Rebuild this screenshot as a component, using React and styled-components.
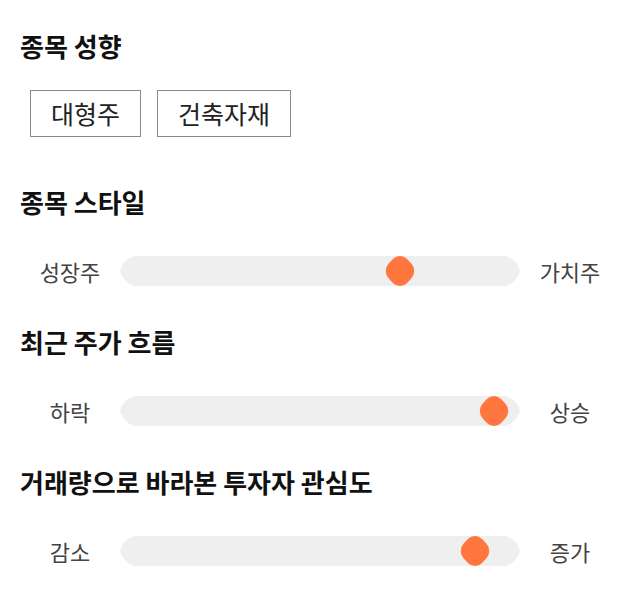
import React from 'react'
import styled, { createGlobalStyle } from 'styled-components'

const GlobalStyle = createGlobalStyle`
  body {
    margin: 0;
    background: #ffffff;
    font-family: "Noto Sans CJK KR", "Noto Sans", sans-serif;
  }
`

const Page = styled.div`
  display: flex;
  flex-direction: column;
  gap: 38px;
  padding: 28px 20px 20px;
`

const Section = styled.section`
  display: flex;
  flex-direction: column;
`

const Title = styled.h2`
  margin: 0;
  font-size: 26px;
  line-height: 36px;
  font-weight: 700;
  color: #111;
`

const ChipRow = styled.div`
  display: flex;
  gap: 16px;
  margin: 26px 0 9px;
  padding-left: 10px;
`

const Chip = styled.button`
  height: 47px;
  padding: 0 20px;
  border: 1px solid #8a8a8a;
  background: #fff;
  font-family: inherit;
  font-size: 25px;
  line-height: 45px;
  color: #222;
`

const SliderRow = styled.div`
  display: flex;
  align-items: center;
  margin-top: 36px;
`

const Label = styled.span`
  width: 100px;
  text-align: center;
  font-size: 22px;
  line-height: 30px;
  color: #444;
`

const Track = styled.div`
  position: relative;
  flex: 1;
  height: 30px;
`

const Rail = styled.div`
  width: 400px;
  height: 30px;
  background: #efefef;
  clip-path: path('M15 0 H385 A20 20 0 0 1 400 15 A20 20 0 0 1 385 30 H15 A20 20 0 0 1 0 15 A20 20 0 0 1 15 0 Z');
`

const Thumb = styled.div`
  position: absolute;
  top: 2px;
  width: 26px;
  height: 26px;
  margin-left: -13px;
  border-radius: 10px;
  background: #ff773f;
  transform: scaleY(1.06) rotate(45deg);
`

const sliders = [
  { title: '종목 스타일', left: '성장주', right: '가치주', value: 0.7 },
  { title: '최근 주가 흐름', left: '하락', right: '상승', value: 0.935 },
  { title: '거래량으로 바라본 투자자 관심도', left: '감소', right: '증가', value: 0.8875 },
]

function Slider({ left, right, value }) {
  return (
    <SliderRow>
      <Label>{left}</Label>
      <Track>
        <Rail />
        <Thumb style={{ left: `${value * 100}%` }} />
      </Track>
      <Label>{right}</Label>
    </SliderRow>
  )
}

export default function App() {
  return (
    <>
      <GlobalStyle />
      <Page>
        <Section>
          <Title>종목 성향</Title>
          <ChipRow>
            <Chip>대형주</Chip>
            <Chip>건축자재</Chip>
          </ChipRow>
        </Section>
        {sliders.map((s) => (
          <Section key={s.title}>
            <Title>{s.title}</Title>
            <Slider left={s.left} right={s.right} value={s.value} />
          </Section>
        ))}
      </Page>
    </>
  )
}
